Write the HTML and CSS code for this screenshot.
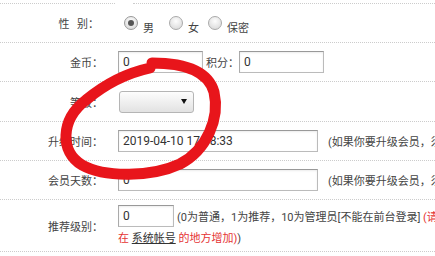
FILE: index.html
```html
<!DOCTYPE html>
<html lang="zh-CN">
<head>
  <meta charset="UTF-8">
  <meta name="viewport" content="width=device-width, initial-scale=1.0">
  <title>会员资料</title>
  <link rel="stylesheet" href="styles.css">
</head>
<body>
  <div class="page">

    <div class="top-strip">
      <span class="seg seg-left"></span>
      <span class="seg seg-right"></span>
    </div>

    <div class="row">
      <div class="label label-sex">性&nbsp;&nbsp;别：</div>
      <div class="value">
        <label class="opt"><span class="radio checked"></span><span class="opt-text">男</span></label>
        <label class="opt opt-2"><span class="radio"></span><span class="opt-text">女</span></label>
        <label class="opt opt-3"><span class="radio"></span><span class="opt-text">保密</span></label>
      </div>
    </div>

    <div class="row">
      <div class="label">金币：</div>
      <div class="value">
        <input type="text" class="text-input w-coin" value="0">
        <span class="inline-label">积分：</span><input type="text" class="text-input w-coin" value="0">
      </div>
    </div>

    <div class="row row-level">
      <div class="label">等级：</div>
      <div class="value">
        <span class="select-box"><span class="arrow"></span></span>
      </div>
    </div>

    <div class="row">
      <div class="label">升级时间：</div>
      <div class="value">
        <input type="text" class="text-input w-wide" value="2019-04-10 17:58:33">
        <span class="note">(如果你要升级会员，须同时修改会员天数)</span>
      </div>
    </div>

    <div class="row">
      <div class="label">会员天数：</div>
      <div class="value">
        <input type="text" class="text-input w-wide" value="0">
        <span class="note">(如果你要升级会员，须同时修改升级时间)</span>
      </div>
    </div>

    <div class="row row-last">
      <div class="label">推荐级别：</div>
      <div class="value value-multi">
        <div class="line-one">
          <input type="text" class="text-input w-small" value="0">
          <span class="hint">(0为普通，1为推荐，10为管理员[不能在前台登录] <span class="warn">(请</span></span>
        </div>
        <div class="line-two">
          <span class="warn">在 <a href="#" class="sys-link">系统帐号</a> 的地方增加)</span>)
        </div>
      </div>
    </div>

    <!-- 手画的红圈 -->
    <svg class="scribble" width="435" height="256" viewBox="0 0 435 256">
      <path d="M152,63 C185,63 208,71 214,92 C220,118 207,150 180,164 C152,177 105,178 82,165 C60,152 60,120 86,100 C104,85 127,73 150,68"
            fill="none" stroke="#e8151b" stroke-width="11" stroke-linecap="round" stroke-linejoin="round"/>
    </svg>

  </div>
</body>
</html>
```

FILE: styles.css
```css
body {
  margin: 0;
  font-family: Roboto, "Noto Sans CJK SC", sans-serif;
  font-size: 11px;
  color: #444;
  background-color: #fff;
  overflow: hidden;
}

.page {
  position: relative;
  width: 435px;
  height: 256px;
  overflow: hidden;
}

.top-strip {
  display: flex;
  height: 4px;
}

.seg {
  border-bottom: 1px dotted #ccc;
}

.seg-left {
  width: 115px;
}

.seg-right {
  flex: 1;
  margin-left: 18px;
}

.row {
  display: flex;
  height: 38px;
  border-bottom: 1px dotted #ccc;
}

.row-level {
  height: 39px;
}

.row-last {
  height: 51px;
}

.label {
  width: 103px;
  flex-shrink: 0;
  display: flex;
  align-items: center;
  justify-content: flex-end;
  white-space: nowrap;
}

.label-sex {
  padding-right: 4px;
  box-sizing: border-box;
  word-spacing: 1px;
}

.value {
  flex: 1;
  min-width: 0;
  padding-left: 15px;
  display: flex;
  align-items: center;
  white-space: nowrap;
}

.value > *,
.line-one > * {
  flex-shrink: 0;
}

/* 单选 */
.opt {
  display: flex;
  align-items: center;
}

.opt:first-child {
  margin-left: 6px;
}

.opt-2 {
  margin-left: 15px;
}

.opt-3 {
  margin-left: 9px;
}

.radio {
  width: 14px;
  height: 14px;
  box-sizing: border-box;
  border: 1px solid #aaa;
  border-radius: 50%;
  background: radial-gradient(circle at 50% 35%, #fdfdfd, #d4d4d4);
  display: flex;
  align-items: center;
  justify-content: center;
}

.radio.checked {
  border-color: #999;
}

.radio.checked::after {
  content: "";
  width: 6px;
  height: 6px;
  border-radius: 50%;
  background-color: #555;
}

.opt-text {
  margin-left: 5px;
  margin-top: 7px;
}

/* 输入框 */
.text-input {
  box-sizing: border-box;
  height: 22px;
  margin: 0;
  padding: 0 4px;
  border: 1px solid #bbb;
  border-top-color: #999;
  border-left-color: #aaa;
  border-radius: 0;
  box-shadow: inset 0 1px 2px rgba(0, 0, 0, 0.08);
  background-color: #fff;
  font-family: Roboto, "Noto Sans CJK SC", sans-serif;
  font-size: 12px;
  color: #333;
}

.w-coin {
  width: 85px;
}

.w-wide {
  width: 200px;
}

.w-small {
  width: 56px;
}

.inline-label {
  margin-left: 3px;
}

.select-box {
  box-sizing: border-box;
  width: 75px;
  height: 22px;
  margin-left: 1px;
  padding-right: 6px;
  border: 1px solid #b5b5b5;
  border-radius: 3px;
  background: linear-gradient(#fdfdfd, #e2e2e2);
  display: flex;
  align-items: center;
  justify-content: flex-end;
}

.arrow {
  width: 0;
  height: 0;
  border-left: 3px solid transparent;
  border-right: 3px solid transparent;
  border-top: 5px solid #111;
}

.note {
  margin-left: 10px;
}

.value-multi {
  flex-direction: column;
  align-items: flex-start;
  justify-content: flex-start;
  padding-top: 5px;
}

.line-one {
  display: flex;
  align-items: center;
  height: 22px;
}

.hint {
  margin-left: 3px;
}

.line-two {
  line-height: 24px;
}

.warn {
  color: #e53333;
}

.sys-link {
  color: #333;
  text-decoration: underline;
}

.scribble {
  position: absolute;
  top: 0;
  left: 0;
  pointer-events: none;
}
```
